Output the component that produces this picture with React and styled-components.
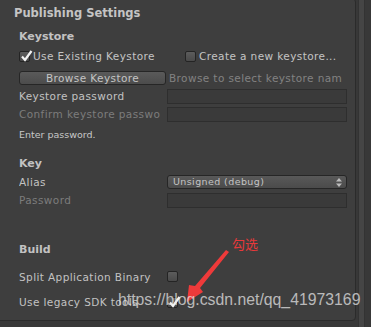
import React from 'react';
import styled, { createGlobalStyle } from 'styled-components';

const GlobalStyle = createGlobalStyle`
  html, body {
    margin: 0;
    padding: 0;
    background: #383838;
    overflow: hidden;
  }
  body {
    font-family: "DejaVu Sans", sans-serif;
  }
`;

// styles
const Screen = styled.div`
  position: relative;
  width: 371px;
  height: 327px;
  display: flex;
  background: #383838;
  overflow: hidden;
`;

const Panel = styled.div`
  width: 360px;
  height: 323px;
  margin: -2px 0 0 -4px;
  box-sizing: border-box;
  background: #3e3e3e;
  border: 1px solid #2b2b2b;
  border-radius: 4px;
  padding: 3px 0 0 17px;
  display: flex;
  flex-direction: column;
`;

const Scroll = styled.div`
  width: 5px;
  margin-left: 2px;
  background: #454545;
  border-left: 1px solid #333;
  border-right: 1px solid #333;
`;

const Title = styled.div`
  height: 24px;
  line-height: 23px;
  font-size: 11.5px;
  font-weight: bold;
  color: #c4c4c4;
`;

const Section = styled.div`
  display: flex;
  flex-direction: column;
  padding-left: 5px;
  margin-top: ${(p) => p.$top || 0}px;
`;

const Header = styled.div`
  height: ${(p) => p.$h || 22}px;
  line-height: 22px;
  font-size: 11px;
  font-weight: bold;
  color: #c2c2c2;
`;

const Row = styled.div`
  display: flex;
  align-items: center;
  height: ${(p) => p.$h || 18}px;
`;

const Label = styled.div`
  width: 148px;
  flex: none;
  font-size: 10.5px;
  letter-spacing: 0.4px;
  white-space: nowrap;
  overflow: hidden;
  color: ${(p) => (p.$disabled ? '#7c7c7c' : '#c2c2c2')};
`;

const Hint = styled.div`
  font-size: 9.5px;
  color: #c8c8c8;
  height: 18px;
  line-height: 18px;
  margin-top: 3px;
`;

const Box = styled.span`
  width: 11px;
  height: 11px;
  flex: none;
  box-sizing: border-box;
  border: 1px solid #242424;
  border-radius: 2px;
  background: linear-gradient(#5c5c5c, #4a4a4a);
  position: relative;
  margin-right: ${(p) => p.$gap || 0}px;
`;

const Tick = styled.svg`
  position: absolute;
  left: -1px;
  top: -3px;
`;

const CheckText = styled.span`
  font-size: 10.5px;
  letter-spacing: 0.4px;
  color: #c4c4c4;
  white-space: nowrap;
`;

const CheckGroup = styled.div`
  display: flex;
  align-items: center;
  width: ${(p) => p.$w || 'auto'};
`;

const Button = styled.div`
  width: 147px;
  height: 14px;
  box-sizing: border-box;
  border: 1px solid #262626;
  border-radius: 3px;
  background: linear-gradient(#5a5a5a, #4c4c4c);
  color: #c4c4c4;
  font-size: 10.5px;
  letter-spacing: 0.4px;
  line-height: 12px;
  text-align: center;
  margin-right: 3px;
`;

const Dim = styled.span`
  font-size: 10.5px;
  letter-spacing: 0.4px;
  color: #828282;
  white-space: nowrap;
  overflow: hidden;
`;

const Field = styled.div`
  width: 180px;
  height: 15px;
  box-sizing: border-box;
  border: 1px solid #2e2e2e;
  background: #3a3a3a;
`;

const Select = styled.div`
  width: 180px;
  height: 14px;
  box-sizing: border-box;
  border: 1px solid #262626;
  border-radius: 3px;
  background: linear-gradient(#595959, #4b4b4b);
  color: #c4c4c4;
  font-size: 9.5px;
  letter-spacing: 0.4px;
  line-height: 12px;
  padding-left: 5px;
  display: flex;
  justify-content: space-between;
  align-items: center;
`;

const Arrows = styled.svg`
  margin-right: 4px;
`;

const Note = styled.div`
  position: absolute;
  left: 232px;
  top: 234px;
  font-family: "Noto Sans CJK SC", sans-serif;
  font-size: 13px;
  color: #e8393a;
`;

const Pointer = styled.svg`
  position: absolute;
  left: 180px;
  top: 248px;
`;

const Watermark = styled.div`
  position: absolute;
  left: 118px;
  top: 291px;
  font-family: "Liberation Sans", Arial, sans-serif;
  font-size: 15.8px;
  color: rgba(235, 235, 235, 0.72);
  white-space: nowrap;
`;

// component
const Check = ({ on, gap }) => (
  <Box $gap={gap}>
    {on && (
      <Tick width="14" height="14" viewBox="0 0 14 14">
        <path d="M3 7.5 L6 11 L12.5 2" fill="none" stroke="#f2f2f2" strokeWidth="2.2" />
      </Tick>
    )}
  </Box>
);

const App = () => (
  <Screen>
    <GlobalStyle />
    <Panel>
      <Title>Publishing Settings</Title>
      <Section>
        <Header $h={18}>Keystore</Header>
        <Row $h={24}>
          <CheckGroup $w="166px">
            <Check on gap={3} />
            <CheckText>Use Existing Keystore</CheckText>
          </CheckGroup>
          <CheckGroup>
            <Check gap={3} />
            <CheckText>Create a new keystore...</CheckText>
          </CheckGroup>
        </Row>
        <Row $h={19}>
          <Button>Browse Keystore</Button>
          <Dim>Browse to select keystore nam</Dim>
        </Row>
        <Row>
          <Label>Keystore password</Label>
          <Field />
        </Row>
        <Row>
          <Label $disabled>Confirm keystore passwo</Label>
          <Field />
        </Row>
        <Hint>Enter password.</Hint>
      </Section>
      <Section $top={9}>
        <Header $h={20}>Key</Header>
        <Row $h={18}>
          <Label>Alias</Label>
          <Select>
            Unsigned (debug)
            <Arrows width="6" height="9" viewBox="0 0 6 9">
              <path d="M3 0 L6 3.5 L0 3.5 Z M3 9 L6 5.5 L0 5.5 Z" fill="#bdbdbd" />
            </Arrows>
          </Select>
        </Row>
        <Row>
          <Label $disabled>Password</Label>
          <Field />
        </Row>
      </Section>
      <Section $top={30}>
        <Header>Build</Header>
        <Row $h={4} />
        <Row $h={23}>
          <Label>Split Application Binary</Label>
          <Check />
        </Row>
        <Row $h={28}>
          <Label>Use legacy SDK tools</Label>
          <Check on />
        </Row>
      </Section>
    </Panel>
    <Scroll />
    <Note>勾选</Note>
    <Pointer width="50" height="56" viewBox="0 0 50 56">
      <path d="M46 2 L49 4 L20 40 L23 44 L7 54 L9 37 L15 38 Z" fill="#ee3a3a" />
    </Pointer>
    <Watermark>https://blog.csdn.net/qq_41973169</Watermark>
  </Screen>
);

export default App;
